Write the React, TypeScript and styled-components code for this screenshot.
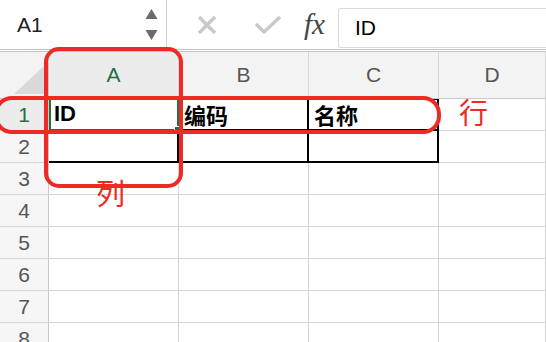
import React from "react";
import styled, { createGlobalStyle, css } from "styled-components";

const GlobalStyle = createGlobalStyle`
  html, body {
    margin: 0;
    padding: 0;
    background: #ffffff;
    overflow: hidden;
  }
  body {
    font-family: "Liberation Sans", "Noto Sans CJK SC", sans-serif;
  }
`;

const GREEN = "#1f7244";
const RED = "#ee2a24";

const columns = ["A", "B", "C", "D"];
const rows = [1, 2, 3, 4, 5, 6, 7, 8];

const cellData: Record<string, string> = {
  A1: "ID",
  B1: "编码",
  C1: "名称",
};

// cells that carry the black table border
const boxed = ["A2", "B1", "B2", "C1", "C2"];

const App: React.FC = () => {
  return (
    <Page>
      <GlobalStyle />
      <Toolbar>
        <NameBox>
          <NameText>A1</NameText>
          <Stepper>
            <Arrow viewBox="0 0 12 10">
              <path d="M6 0 L12 10 L0 10 Z" />
            </Arrow>
            <Arrow viewBox="0 0 12 10">
              <path d="M0 0 L12 0 L6 10 Z" />
            </Arrow>
          </Stepper>
        </NameBox>
        <Actions>
          <ActionIcon viewBox="0 0 20 20" $w={22}>
            <path d="M2 2 L18 18 M18 2 L2 18" />
          </ActionIcon>
          <ActionIcon viewBox="0 0 28 20" $w={28}>
            <path d="M2 9 L10 17 L26 2" />
          </ActionIcon>
          <Fx>fx</Fx>
        </Actions>
        <FormulaInput>ID</FormulaInput>
      </Toolbar>

      <Stage>
        <Sheet>
          <Corner>
            <CornerTriangle viewBox="0 0 30 28">
              <path d="M30 0 L30 28 L0 28 Z" />
            </CornerTriangle>
          </Corner>
          {columns.map((c) => (
            <ColHeader key={c} $active={c === "A"}>
              {c}
            </ColHeader>
          ))}
          {rows.map((r) => (
            <React.Fragment key={r}>
              <RowHeader $active={r === 1}>{r}</RowHeader>
              {columns.map((c) => {
                const id = `${c}${r}`;
                return (
                  <Cell
                    key={id}
                    $boxed={boxed.includes(id)}
                    $top={r === 1 && boxed.includes(id)}
                    $selected={id === "A1"}
                  >
                    {cellData[id]}
                    {id === "A1" && <Handle />}
                  </Cell>
                );
              })}
            </React.Fragment>
          ))}
        </Sheet>

        <ColumnMark />
        <RowMark />
        <Note style={{ left: 96, top: 126 }}>列</Note>
        <Note style={{ left: 459, top: 45 }}>行</Note>
      </Stage>
    </Page>
  );
};

const Page = styled.div`
  width: 546px;
  height: 342px;
  overflow: hidden;
  background: #ffffff;
`;

const Toolbar = styled.div`
  display: flex;
  align-items: center;
  height: 49px;
  border-bottom: 3px double #c4c4c4;
  background: #ffffff;
`;

const NameBox = styled.div`
  display: flex;
  align-items: center;
  justify-content: space-between;
  box-sizing: border-box;
  width: 167px;
  height: 49px;
  padding: 0 8px 0 17px;
  border-right: 1px solid #d2d2d2;
`;

const NameText = styled.span`
  font-size: 21px;
  color: #222;
`;

const Stepper = styled.div`
  display: flex;
  flex-direction: column;
  gap: 11px;
`;

const Arrow = styled.svg`
  width: 13px;
  height: 10px;
  fill: #6b6b6b;
`;

const Actions = styled.div`
  display: flex;
  align-items: center;
  padding-left: 29px;
`;

const ActionIcon = styled.svg<{ $w: number }>`
  width: ${(p) => p.$w}px;
  height: 20px;
  margin-right: 36px;
  fill: none;
  stroke: #c9c9c9;
  stroke-width: 3.4;
`;

const Fx = styled.span`
  font-family: "Liberation Serif", "DejaVu Serif", serif;
  font-style: italic;
  font-size: 29px;
  color: #444;
  margin-left: -14px;
  margin-right: 13px;
`;

const FormulaInput = styled.div`
  flex: 1;
  display: flex;
  align-items: center;
  box-sizing: border-box;
  height: 40px;
  margin-top: 6px;
  padding-left: 16px;
  border: 1px solid #dcdcdc;
  border-right: none;
  border-radius: 3px 0 0 3px;
  font-size: 21px;
  color: #000;
`;

const Stage = styled.div`
  position: relative;
`;

const Sheet = styled.div`
  display: grid;
  grid-template-columns: 49px 130px 130px 130px 1fr;
  grid-template-rows: 47px repeat(8, 32px);
`;

const headerBase = css`
  display: flex;
  align-items: center;
  justify-content: center;
  box-sizing: border-box;
  background: #f3f3f3;
  font-size: 21px;
  color: #555;
`;

const Corner = styled.div`
  ${headerBase};
  position: relative;
  border-right: 1px solid #c9c9c9;
  border-bottom: 1px solid #c9c9c9;
`;

const CornerTriangle = styled.svg`
  position: absolute;
  right: 4px;
  bottom: 4px;
  width: 30px;
  height: 28px;
  fill: #d9d9d9;
`;

const ColHeader = styled.div<{ $active?: boolean }>`
  ${headerBase};
  border-right: 1px solid #d6d6d6;
  border-bottom: 1px solid #c9c9c9;
  ${(p) =>
    p.$active &&
    css`
      background: #ececec;
      color: ${GREEN};
      border-bottom: 2px solid ${GREEN};
    `}
`;

const RowHeader = styled.div<{ $active?: boolean }>`
  ${headerBase};
  background: #f6f6f6;
  border-right: 1px solid #c9c9c9;
  border-bottom: 1px solid #d6d6d6;
  ${(p) =>
    p.$active &&
    css`
      background: #ececec;
      color: ${GREEN};
    `}
`;

const Cell = styled.div<{ $boxed?: boolean; $top?: boolean; $selected?: boolean }>`
  position: relative;
  display: flex;
  align-items: center;
  box-sizing: border-box;
  padding-left: 5px;
  border-right: 1px solid #d6d6d6;
  border-bottom: 1px solid #d6d6d6;
  font-size: 22px;
  font-weight: bold;
  color: #000;
  ${(p) =>
    p.$boxed &&
    css`
      border-right: 2px solid #000;
      border-bottom: 2px solid #000;
    `}
  ${(p) =>
    p.$top &&
    css`
      box-shadow: inset 0 1px 0 #000;
    `}
  ${(p) =>
    p.$selected &&
    css`
      border: 2px solid ${GREEN};
      border-top: none;
      padding-left: 3px;
    `}
`;

const Handle = styled.span`
  position: absolute;
  right: -5px;
  bottom: -5px;
  width: 6px;
  height: 6px;
  background: ${GREEN};
  border: 1px solid #fff;
`;

const ColumnMark = styled.div`
  position: absolute;
  left: 44px;
  top: -5px;
  width: 139px;
  height: 141px;
  box-sizing: border-box;
  border: 4px solid ${RED};
  border-radius: 15px;
  pointer-events: none;
`;

const RowMark = styled.div`
  position: absolute;
  left: -6px;
  top: 44px;
  width: 447px;
  height: 38px;
  box-sizing: border-box;
  border: 4px solid ${RED};
  border-radius: 18px;
  pointer-events: none;
`;

const Note = styled.span`
  position: absolute;
  font-family: "Noto Sans CJK SC", sans-serif;
  font-size: 29px;
  line-height: 1;
  color: ${RED};
`;

export default App;
